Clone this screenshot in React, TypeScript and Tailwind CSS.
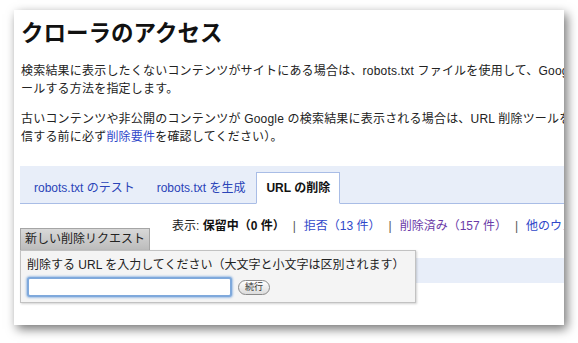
import React from "react";

const font = "font-['Liberation_Sans','Noto_Sans_CJK_JP',sans-serif]";

function Sep() {
  return <span className="mx-[8px] text-[#555]">|</span>;
}

export default function App() {
  return (
    <div className={`w-[578px] h-[343px] bg-white overflow-hidden ${font}`}>
      <div className="relative ml-[14px] mt-[10px] w-[550px] h-[315px] bg-white overflow-hidden shadow-[3px_4px_10px_rgba(0,0,0,0.55)]">
        <div className="pl-[6px] pt-[10px] text-[#222]">
          {/* Header */}
          <h1 className="ml-px text-[22.5px] leading-[28px] font-bold text-[#111] whitespace-nowrap">クローラのアクセス</h1>

          <p className="ml-px mt-[14px] text-[12px] leading-[18px] tracking-[0.2px] whitespace-nowrap">
            検索結果に表示したくないコンテンツがサイトにある場合は、robots.txt ファイルを使用して、Google がサイトをクロ
            <br />
            ールする方法を指定します。
          </p>

          <p className="ml-px mt-[12px] text-[12px] leading-[18px] tracking-[0.2px] whitespace-nowrap">
            古いコンテンツや非公開のコンテンツが Google の検索結果に表示される場合は、URL 削除ツールを使用して削除をリクエストできます（リクエストを送
            <br />
            信する前に必ず<a className="text-[#2f47c9]">削除要件</a>を確認してください）。
          </p>

          {/* Tabs */}
          <div className="mt-[20px] h-[38px] w-[800px] bg-[#e8eef9] border-b border-[#a9bde6] flex items-end pl-[3px] text-[12px] whitespace-nowrap">
            <div className="h-[32px] -mb-px px-[10px] border border-transparent flex items-center text-[#2a44b8]">robots.txt のテスト</div>
            <div className="h-[32px] -mb-px px-[10px] border border-transparent flex items-center text-[#2a44b8]">robots.txt を生成</div>
            <div className="h-[32px] -mb-px px-[9px] bg-white border border-[#a9bde6] border-b-white flex items-center font-bold text-[#111]">URL の削除</div>
          </div>

          {/* Status */}
          <div className="mt-[13px] ml-[152px] text-[12px] leading-[18px] whitespace-nowrap">
            表示: <b className="text-[#111]">保留中（0 件）</b>
            <Sep />
            <a className="text-[#2f47c9]">拒否（13 件）</a>
            <Sep />
            <a className="text-[#6a3aa8]">削除済み（157 件）</a>
            <Sep />
            <a className="text-[#2f47c9]">他のウェブマスターによるリクエスト</a>
          </div>

          <div className="mt-[23px] h-[25px] w-[800px] bg-[#e8eef9]" />
        </div>

        {/* New removal request popup */}
        <div className="absolute left-[6px] top-[218px] text-[12px] text-[#222]">
          <div className="w-[130px] h-[22px] border border-b-0 border-[#a5a5a5] bg-gradient-to-b from-[#d8d8d8] to-[#bcbcbc] pl-[4px] leading-[21px] whitespace-nowrap">
            新しい削除リクエスト
          </div>
          <div className="w-[396px] border border-[#c2c2c2] bg-[#f4f4f4] px-[6px] pt-[5px] pb-[5px] shadow-[1px_1px_2px_rgba(0,0,0,0.18)]">
            <div className="leading-[18px] whitespace-nowrap">削除する URL を入力してください（大文字と小文字は区別されます）</div>
            <div className="mt-[3px] flex items-center">
              <input className="w-[205px] h-[20px] bg-white border-2 border-[#7fa9dc] rounded-[3px] shadow-[0_0_2px_1px_rgba(110,160,220,0.6)] outline-none" />
              <button className="ml-[6px] h-[15px] px-[6px] rounded-full border border-[#8a8a8a] bg-gradient-to-b from-white to-[#dcdcdc] text-[9px] leading-[13px] text-[#333]">
                続行
              </button>
            </div>
          </div>
        </div>
      </div>
    </div>
  );
}
